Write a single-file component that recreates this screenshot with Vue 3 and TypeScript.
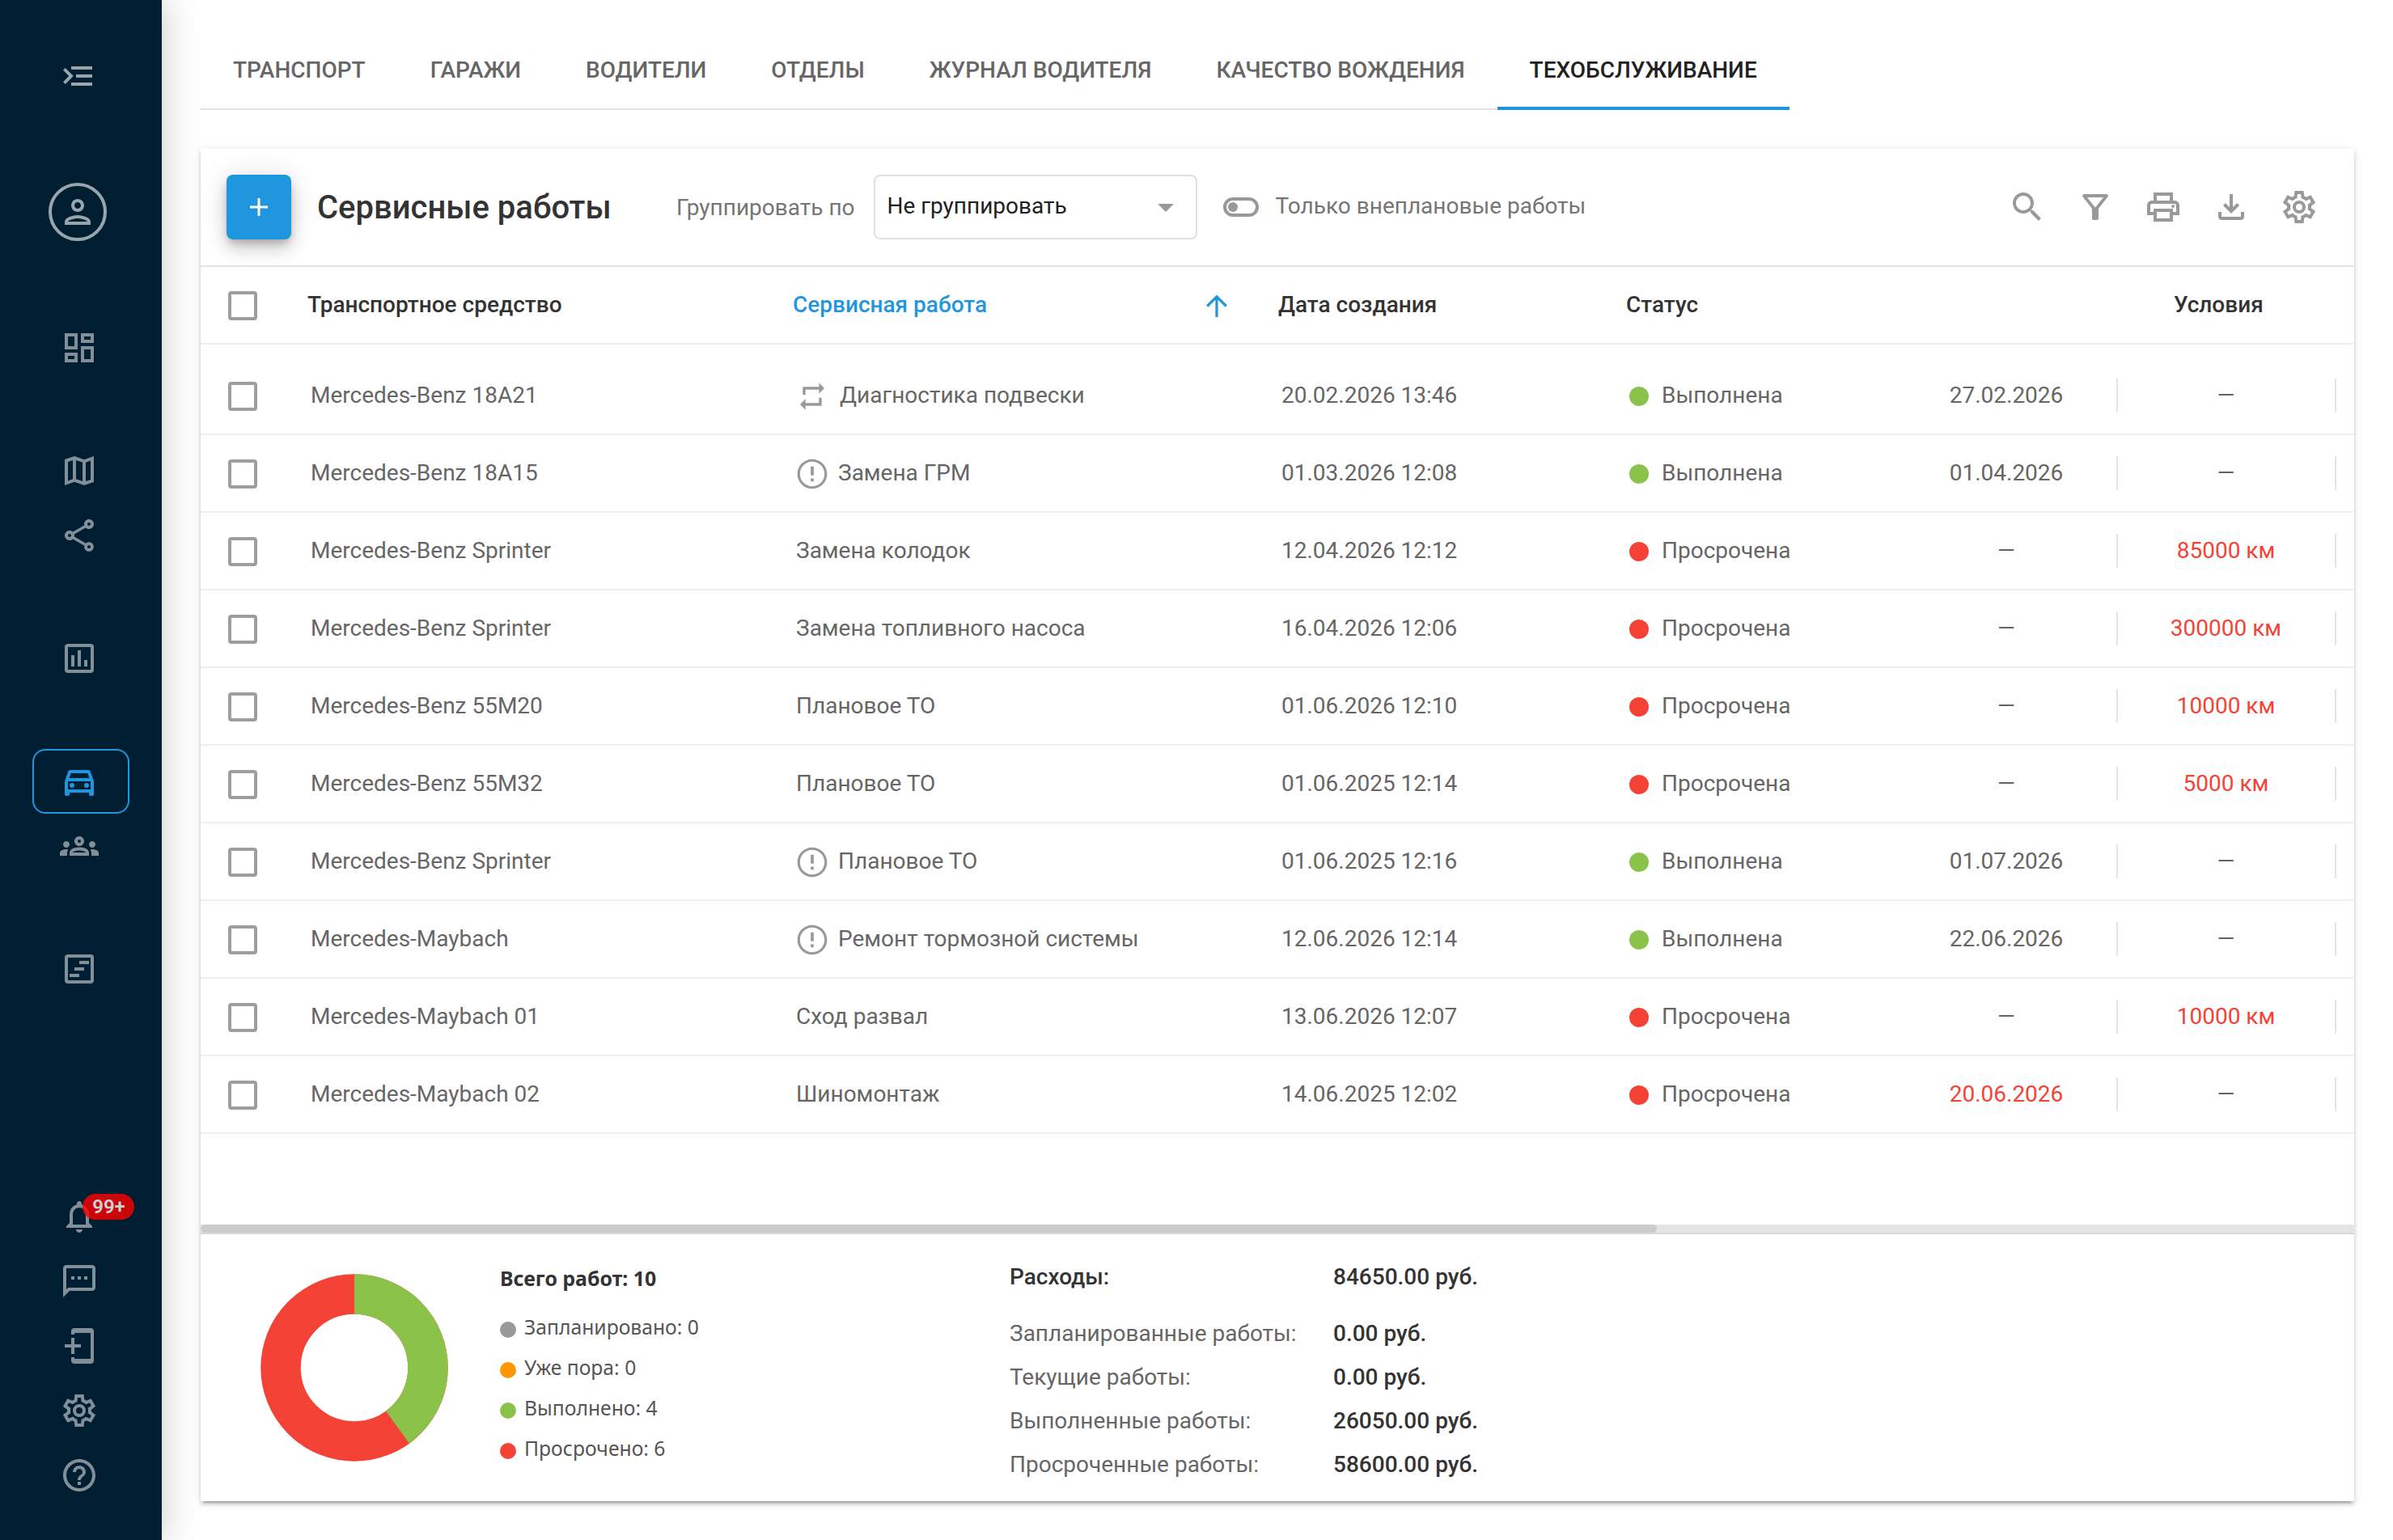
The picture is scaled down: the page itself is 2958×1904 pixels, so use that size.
<script setup lang="ts">
interface Job {
  vehicle: string
  work: string
  icon?: 'repeat' | 'alert'
  created: string
  done: boolean
  date: string
  dateLate?: boolean
  mileage: string
}

const GEAR =
  'M9.25 22l-.4-3.2q-.325-.125-.612-.3-.288-.175-.563-.375L4.7 19.375l-2.75-4.75 2.575-1.95Q4.5 12.5 4.5 12.337v-.675q0-.162.025-.337L1.95 9.375l2.75-4.75 2.975 1.25q.275-.2.575-.375.3-.175.6-.3l.4-3.2h5.5l.4 3.2q.325.125.613.3.287.175.562.375l2.975-1.25 2.75 4.75-2.575 1.95q.025.175.025.337v.675q0 .163-.05.338l2.575 1.95-2.75 4.75-2.95-1.25q-.275.2-.575.375-.3.175-.6.3l-.4 3.2zM11 20h1.975l.35-2.65q.775-.2 1.438-.588.662-.387 1.212-.937l2.475 1.025.975-1.7-2.15-1.625q.125-.35.175-.738Q17.5 12.4 17.5 12t-.05-.787q-.05-.388-.175-.738l2.15-1.625-.975-1.7-2.475 1.05q-.55-.575-1.212-.963-.663-.387-1.438-.587L13 4h-1.975l-.35 2.65q-.775.2-1.437.587-.663.388-1.213.938L5.55 7.15l-.975 1.7 2.15 1.6q-.125.375-.175.75-.05.375-.05.8 0 .4.05.775t.175.75l-2.15 1.625.975 1.7 2.475-1.05q.55.575 1.213.962.662.388 1.437.588zM12 8a4 4 0 1 0 0 8a4 4 0 1 0 0-8zM12 10a2 2 0 1 1 0 4a2 2 0 1 1 0-4z'

const icons: Record<string, string> = {
  menu: 'M21 18v-2H8v2h13zM4.4 17l5-5-5-5L3 8.4 6.6 12 3 15.6 4.4 17zM21 13v-2H11v2h10zm0-5V6H8v2h13z',
  person:
    'M12 6c1.1 0 2 .9 2 2s-.9 2-2 2-2-.9-2-2 .9-2 2-2m0 10c2.7 0 5.8 1.29 6 2H6c.23-.72 3.31-2 6-2m0-12C9.79 4 8 5.79 8 8s1.79 4 4 4 4-1.79 4-4-1.79-4-4-4zm0 10c-2.67 0-8 1.34-8 4v2h16v-2c0-2.66-5.33-4-8-4z',
  dashboard:
    'M19 5v2h-4V5h4M9 5v6H5V5h4m10 8v6h-4v-6h4M9 17v2H5v-2h4M21 3h-8v6h8V3zM11 3H3v10h8V3zm10 8h-8v10h8V11zm-10 4H3v6h8v-6z',
  map: 'M3 5l6-2 6 2.1L21 3v16l-6 2-6-2.1L3 21V5zM10 5.47v11.66l4 1.4V6.87l-4-1.4zM5 6.46v11.85l3-1.16V5.45L5 6.46zM19 17.54V5.7l-3 1.16v11.69l3-1.01z',
  share:
    'M18 16.08c-.76 0-1.44.3-1.96.77L8.91 12.7c.05-.23.09-.46.09-.7s-.04-.47-.09-.7l7.05-4.11c.54.5 1.25.81 2.04.81 1.66 0 3-1.34 3-3s-1.34-3-3-3-3 1.34-3 3c0 .24.04.47.09.7L8.04 9.81C7.5 9.31 6.79 9 6 9c-1.66 0-3 1.34-3 3s1.34 3 3 3c.79 0 1.5-.31 2.04-.81l7.12 4.16c-.05.21-.08.43-.08.65 0 1.61 1.31 2.92 2.92 2.92s2.92-1.31 2.92-2.92-1.31-2.92-2.92-2.92zM18 4c.55 0 1 .45 1 1s-.45 1-1 1-1-.45-1-1 .45-1 1-1zM6 13c-.55 0-1-.45-1-1s.45-1 1-1 1 .45 1 1-.45 1-1 1zm12 7.02c-.55 0-1-.45-1-1s.45-1 1-1 1 .45 1 1-.45 1-1 1z',
  chart:
    'M5 3h14a2 2 0 0 1 2 2v14a2 2 0 0 1-2 2H5a2 2 0 0 1-2-2V5a2 2 0 0 1 2-2zM5 5v14h14V5H5zM7 10h2v7H7zM11 7h2v10h-2zM15 13h2v4h-2z',
  car: 'M18.92 5.01C18.72 4.42 18.16 4 17.5 4h-11c-.66 0-1.21.42-1.42 1.01L3 11v8c0 .55.45 1 1 1h1c.55 0 1-.45 1-1v-1h12v1c0 .55.45 1 1 1h1c.55 0 1-.45 1-1v-8l-2.08-5.99zM6.85 6h10.29l1.04 3H5.81l1.04-3zM19 16H5v-5h14v5zM6 13.5a1.5 1.5 0 1 0 3 0a1.5 1.5 0 1 0-3 0zM15 13.5a1.5 1.5 0 1 0 3 0a1.5 1.5 0 1 0-3 0z',
  groups:
    'M4 13c1.1 0 2-.9 2-2s-.9-2-2-2-2 .9-2 2 .9 2 2 2zm1.13 1.1c-.37-.06-.74-.1-1.13-.1-.99 0-1.93.21-2.78.58C.48 14.9 0 15.62 0 16.43V18h4.5v-1.61c0-.83.23-1.61.63-2.29zM20 13c1.1 0 2-.9 2-2s-.9-2-2-2-2 .9-2 2 .9 2 2 2zm4 3.43c0-.81-.48-1.53-1.22-1.85-.85-.37-1.79-.58-2.78-.58-.39 0-.76.04-1.13.1.4.68.63 1.46.63 2.29V18H24v-1.57zm-7.76-2.78c-1.17-.52-2.61-.9-4.24-.9-1.63 0-3.07.39-4.24.9C6.68 14.13 6 15.21 6 16.39V18h12v-1.61c0-1.18-.68-2.26-1.76-2.74zM8.07 16c.09-.23.13-.39.91-.69.97-.38 1.99-.56 3.02-.56s2.05.18 3.02.56c.77.3.81.46.91.69H8.07zM12 8c.55 0 1 .45 1 1s-.45 1-1 1-1-.45-1-1 .45-1 1-1m0-2c-1.66 0-3 1.34-3 3s1.34 3 3 3 3-1.34 3-3-1.34-3-3-3z',
  gantt:
    'M5 3h14a2 2 0 0 1 2 2v14a2 2 0 0 1-2 2H5a2 2 0 0 1-2-2V5a2 2 0 0 1 2-2zM5 5v14h14V5H5zM12 7h6v2h-6zM9 11h6v2H9zM6 15h6v2H6z',
  bell: 'M12 22c1.1 0 2-.9 2-2h-4c0 1.1.9 2 2 2zm6-6v-5c0-3.07-1.63-5.64-4.5-6.32V4c0-.83-.67-1.5-1.5-1.5s-1.5.67-1.5 1.5v.68C7.64 5.36 6 7.92 6 11v5l-2 2v1h16v-1l-2-2zm-2 1H8v-6c0-2.48 1.51-4.5 4-4.5s4 2.02 4 4.5v6z',
  chat: 'M20 2H4c-1.1 0-2 .9-2 2v18l4-4h14c1.1 0 2-.9 2-2V4c0-1.1-.9-2-2-2zm0 14H5.17L4 17.17V4h16v12zM7 9h2v2H7zm4 0h2v2h-2zm4 0h2v2h-2z',
  device:
    'M9 1h10a2 2 0 0 1 2 2v18a2 2 0 0 1-2 2H9a2 2 0 0 1-2-2v-2h2v1h10V4H9v1H7V3a2 2 0 0 1 2-2zM7 7h2v4h4v2H9v4H7v-4H3v-2h4z',
  gear: GEAR,
  help: 'M11 18h2v-2h-2v2zm1-16C6.48 2 2 6.48 2 12s4.48 10 10 10 10-4.48 10-10S17.52 2 12 2zm0 18c-4.41 0-8-3.59-8-8s3.59-8 8-8 8 3.59 8 8-3.59 8-8 8zm0-14c-2.21 0-4 1.79-4 4h2c0-1.1.9-2 2-2s2 .9 2 2c0 2-3 1.75-3 5h2c0-2.25 3-2.5 3-5 0-2.21-1.79-4-4-4z',
  search:
    'M15.5 14h-.79l-.28-.27C15.41 12.59 16 11.11 16 9.5 16 5.91 13.09 3 9.5 3S3 5.91 3 9.5 5.91 16 9.5 16c1.61 0 3.09-.59 4.23-1.57l.27.28v.79l5 4.99L20.49 19l-4.99-5zm-6 0C7.01 14 5 11.99 5 9.5S7.01 5 9.5 5 14 7.01 14 9.5 11.99 14 9.5 14z',
  filter:
    'M7 6h10l-5.01 6.3L7 6zM4.25 5.61C6.27 8.2 10 13 10 13v6c0 .55.45 1 1 1h2c.55 0 1-.45 1-1v-6s3.72-4.8 5.74-7.39C20.25 4.95 19.78 4 18.95 4H5.04c-.83 0-1.3.95-.79 1.61z',
  print:
    'M19 8h-1V3H6v5H5c-1.66 0-3 1.34-3 3v6h4v4h12v-4h4v-6c0-1.66-1.34-3-3-3zM8 5h8v3H8V5zm8 12v2H8v-4h8v2zm2-2v-2H6v2H4v-4c0-.55.45-1 1-1h14c.55 0 1 .45 1 1v4h-2zM17 11.5a1 1 0 1 0 2 0a1 1 0 1 0-2 0z',
  download:
    'M12 16l-5-5 1.4-1.45 2.6 2.6V4h2v8.15l2.6-2.6L17 11l-5 5zM6 20c-.55 0-1.02-.2-1.41-.59A1.93 1.93 0 0 1 4 18v-3h2v3h12v-3h2v3c0 .55-.2 1.02-.59 1.41-.39.4-.86.59-1.41.59H6z',
  repeat: 'M7 7h10v3l4-4-4-4v3H5v6h2V7zm10 10H7v-3l-4 4 4 4v-3h12v-6h-2v4z',
  alert:
    'M11 15h2v2h-2zm0-8h2v6h-2zm.99-5C6.47 2 2 6.48 2 12s4.47 10 9.99 10C17.52 22 22 17.52 22 12S17.52 2 11.99 2zM12 20.3c-4.58 0-8.3-3.72-8.3-8.3s3.72-8.3 8.3-8.3 8.3 3.72 8.3 8.3-3.72 8.3-8.3 8.3z',
}

const navGroups: string[][] = [['dashboard'], ['map', 'share'], ['chart'], ['car', 'groups'], ['gantt']]
const navBottom: string[] = ['bell', 'chat', 'device', 'gear', 'help']
const tabs: string[] = [
  'ТРАНСПОРТ',
  'ГАРАЖИ',
  'ВОДИТЕЛИ',
  'ОТДЕЛЫ',
  'ЖУРНАЛ ВОДИТЕЛЯ',
  'КАЧЕСТВО ВОЖДЕНИЯ',
  'ТЕХОБСЛУЖИВАНИЕ',
]
const activeTab = tabs[6]
const tools: string[] = ['search', 'filter', 'print', 'download', 'gear']

const jobs: Job[] = [
  { vehicle: 'Mercedes-Benz 18A21', work: 'Диагностика подвески', icon: 'repeat', created: '20.02.2026 13:46', done: true, date: '27.02.2026', mileage: '—' },
  { vehicle: 'Mercedes-Benz 18A15', work: 'Замена ГРМ', icon: 'alert', created: '01.03.2026 12:08', done: true, date: '01.04.2026', mileage: '—' },
  { vehicle: 'Mercedes-Benz Sprinter', work: 'Замена колодок', created: '12.04.2026 12:12', done: false, date: '—', mileage: '85000 км' },
  { vehicle: 'Mercedes-Benz Sprinter', work: 'Замена топливного насоса', created: '16.04.2026 12:06', done: false, date: '—', mileage: '300000 км' },
  { vehicle: 'Mercedes-Benz 55M20', work: 'Плановое ТО', created: '01.06.2026 12:10', done: false, date: '—', mileage: '10000 км' },
  { vehicle: 'Mercedes-Benz 55M32', work: 'Плановое ТО', created: '01.06.2025 12:14', done: false, date: '—', mileage: '5000 км' },
  { vehicle: 'Mercedes-Benz Sprinter', work: 'Плановое ТО', icon: 'alert', created: '01.06.2025 12:16', done: true, date: '01.07.2026', mileage: '—' },
  { vehicle: 'Mercedes-Maybach', work: 'Ремонт тормозной системы', icon: 'alert', created: '12.06.2026 12:14', done: true, date: '22.06.2026', mileage: '—' },
  { vehicle: 'Mercedes-Maybach 01', work: 'Сход развал', created: '13.06.2026 12:07', done: false, date: '—', mileage: '10000 км' },
  { vehicle: 'Mercedes-Maybach 02', work: 'Шиномонтаж', created: '14.06.2025 12:02', done: false, date: '20.06.2026', dateLate: true, mileage: '—' },
]

const legend = [
  { label: 'Запланировано: 0', tone: 'grey' },
  { label: 'Уже пора: 0', tone: 'orange' },
  { label: 'Выполнено: 4', tone: 'green' },
  { label: 'Просрочено: 6', tone: 'red' },
]

const costs = [
  { label: 'Запланированные работы:', value: '0.00 руб.' },
  { label: 'Текущие работы:', value: '0.00 руб.' },
  { label: 'Выполненные работы:', value: '26050.00 руб.' },
  { label: 'Просроченные работы:', value: '58600.00 руб.' },
]
</script>

<template>
  <div class="app">
    <aside class="sidebar">
      <button class="menu">
        <svg class="icon" viewBox="0 0 24 24"><path :d="icons.menu" /></svg>
      </button>
      <div class="avatar">
        <svg class="icon" viewBox="0 0 24 24"><path :d="icons.person" /></svg>
      </div>
      <nav class="nav">
        <div v-for="(group, i) in navGroups" :key="i" class="nav-group">
          <a v-for="name in group" :key="name" class="nav-item" :class="{ active: name === 'car' }">
            <svg class="icon" viewBox="0 0 24 24"><path fill-rule="evenodd" :d="icons[name]" /></svg>
          </a>
        </div>
      </nav>
      <div class="nav-group bottom">
        <a v-for="name in navBottom" :key="name" class="nav-item">
          <svg class="icon" viewBox="0 0 24 24"><path fill-rule="evenodd" :d="icons[name]" /></svg>
          <span v-if="name === 'bell'" class="badge">99+</span>
        </a>
      </div>
    </aside>

    <main class="main">
      <div class="tabs">
        <a v-for="tab in tabs" :key="tab" class="tab" :class="{ current: tab === activeTab }">{{ tab }}</a>
      </div>

      <section class="card">
        <header class="toolbar">
          <button class="add">
            <svg viewBox="0 0 22 22"><path d="M11 0v22M0 11h22" /></svg>
          </button>
          <h1 class="title">Сервисные работы</h1>
          <span class="group-label">Группировать по</span>
          <div class="select"><span>Не группировать</span><i class="caret"></i></div>
          <div class="toggle"><i class="knob"></i></div>
          <span class="toggle-label">Только внеплановые работы</span>
          <div class="tools">
            <svg v-for="name in tools" :key="name" class="icon" viewBox="0 0 24 24"><path fill-rule="evenodd" :d="icons[name]" /></svg>
          </div>
        </header>

        <div class="row head">
          <div class="check-cell"><i class="check"></i></div>
          <div>Транспортное средство</div>
          <div class="sorted">
            <span>Сервисная работа</span>
            <svg viewBox="0 0 26 27"><path d="M13 27V2M1.2 13.5L13 1.8l11.8 11.7" /></svg>
          </div>
          <div>Дата создания</div>
          <div>Статус</div>
          <div class="cond-head">Условия</div>
        </div>

        <div class="body">
          <div v-for="(job, i) in jobs" :key="i" class="row item">
            <div class="check-cell"><i class="check"></i></div>
            <div class="cell">{{ job.vehicle }}</div>
            <div class="cell work">
              <span v-if="job.icon" class="work-icon" :class="job.icon">
                <svg viewBox="0 0 24 24"><path fill-rule="evenodd" :d="icons[job.icon]" /></svg>
              </span>
              <span>{{ job.work }}</span>
            </div>
            <div class="cell">{{ job.created }}</div>
            <div class="cell status">
              <i class="dot" :class="job.done ? 'green' : 'red'"></i>
              <span>{{ job.done ? 'Выполнена' : 'Просрочена' }}</span>
            </div>
            <div class="cond" :class="{ late: job.dateLate }">{{ job.date }}</div>
            <div class="cond" :class="{ late: job.mileage !== '—' }">{{ job.mileage }}</div>
          </div>
        </div>

        <div class="scroll"><div class="thumb"></div></div>

        <footer class="summary">
          <svg class="donut" viewBox="0 0 232 232">
            <circle class="d-red" cx="116" cy="116" r="91" pathLength="100" />
            <circle class="d-green" cx="116" cy="116" r="91" pathLength="100" stroke-dasharray="40 60" transform="rotate(-90 116 116)" />
          </svg>
          <div class="legend">
            <div class="legend-title">Всего работ: 10</div>
            <div v-for="l in legend" :key="l.label" class="legend-item">
              <i :class="l.tone"></i><span>{{ l.label }}</span>
            </div>
          </div>
          <div class="costs">
            <div class="cost total"><span>Расходы:</span><b>84650.00 руб.</b></div>
            <div v-for="c in costs" :key="c.label" class="cost">
              <span>{{ c.label }}</span><b>{{ c.value }}</b>
            </div>
          </div>
        </footer>
      </section>
    </main>
  </div>
</template>

<style>
html,
body {
  margin: 0;
  background: #fff;
}
</style>

<style scoped>
* {
  box-sizing: border-box;
}
.app {
  display: flex;
  width: 2958px;
  height: 1904px;
  overflow: hidden;
  background: #fff;
  font-family: Roboto, 'Liberation Sans', sans-serif;
  font-size: 28px;
  line-height: 36px;
  color: #666;
}
button {
  padding: 0;
  border: 0;
  background: none;
}
.icon {
  display: block;
  width: 48px;
  height: 48px;
  fill: currentColor;
}

.sidebar {
  display: flex;
  flex-direction: column;
  flex: none;
  width: 200px;
  height: 1904px;
  padding: 70px 0 40px;
  background: #001e31;
  box-shadow: 0 0 44px rgba(0, 0, 0, 0.22);
  color: rgba(255, 255, 255, 0.5);
  z-index: 1;
}
.menu {
  margin-left: 72px;
  width: 48px;
  height: 48px;
  color: rgba(255, 255, 255, 0.6);
}
.avatar {
  display: flex;
  align-items: center;
  justify-content: center;
  width: 72px;
  height: 72px;
  margin: 108px 0 0 60px;
  border: 4px solid #99a5ad;
  border-radius: 50%;
  color: #99a5ad;
}
.nav {
  display: flex;
  flex-direction: column;
  gap: 72px;
  margin-top: 92px;
}
.nav-group {
  display: flex;
  flex-direction: column;
  padding-left: 40px;
}
.nav-item {
  position: relative;
  display: flex;
  align-items: center;
  justify-content: center;
  width: 120px;
  height: 80px;
  padding-right: 4px;
}
.nav-item.active {
  padding-top: 4px;
  border: 2px solid #1f96dd;
  border-radius: 16px;
  color: #1f96dd;
}
.bottom {
  margin-top: auto;
}
.badge {
  position: absolute;
  left: 62px;
  top: 12px;
  width: 64px;
  height: 32px;
  padding-left: 1px;
  border-radius: 16px;
  background: #f00;
  opacity: 0.8;
  color: #fff;
  font-size: 24px;
  font-weight: 600;
  line-height: 32px;
  text-align: center;
}

.main {
  display: flex;
  flex-direction: column;
  align-items: flex-start;
  padding: 40px 48px 48px;
}
.tabs {
  display: flex;
  height: 96px;
  margin-bottom: 48px;
  box-shadow: inset 0 -2px #e4e4e4;
}
.tab {
  padding: 1px 40px 0;
  border-bottom: 4px solid transparent;
  font-weight: 500;
  line-height: 92px;
  white-space: nowrap;
}
.tab.current {
  border-color: #1f96dd;
  color: #212121;
}

.card {
  display: flex;
  flex-direction: column;
  width: 2662px;
  height: 1672px;
  background: #fff;
  box-shadow:
    0 6px 2px -4px rgba(0, 0, 0, 0.2),
    0 4px 4px rgba(0, 0, 0, 0.14),
    0 2px 10px rgba(0, 0, 0, 0.12);
}
.toolbar {
  display: flex;
  align-items: center;
  flex: none;
  height: 146px;
  padding: 0 44px 0 32px;
  border-bottom: 2px solid #e4e4e4;
  white-space: nowrap;
}
.add {
  display: flex;
  align-items: center;
  justify-content: center;
  width: 80px;
  height: 80px;
  border-radius: 8px;
  background: #1f96dd;
  box-shadow:
    0 6px 10px -2px rgba(0, 0, 0, 0.2),
    0 12px 20px rgba(0, 0, 0, 0.14),
    0 2px 36px rgba(0, 0, 0, 0.12);
}
.add svg {
  width: 22px;
  height: 22px;
  stroke: #fff;
  stroke-width: 3;
}
.title {
  width: 444px;
  margin: 0 0 0 32px;
  padding-top: 2px;
  font-size: 40px;
  font-weight: 500;
  line-height: 48px;
  color: #333;
}
.group-label {
  width: 244px;
  padding-top: 2px;
  color: #757575;
}
.select {
  display: flex;
  align-items: center;
  justify-content: space-between;
  width: 400px;
  height: 80px;
  padding: 0 27px 2px 14.5px;
  border: 2px solid #e0e0e0;
  border-radius: 8px;
  color: #212121;
}
.caret {
  margin-top: 4px;
  border: 10px solid transparent;
  border-top-color: #999;
  border-bottom: 0;
}
.toggle {
  width: 44px;
  height: 24px;
  margin: 0 20.5px 0 32px;
  padding: 2px;
  border: 4px solid #999;
  border-radius: 12px;
}
.knob {
  display: block;
  width: 12px;
  height: 12px;
  border-radius: 50%;
  background: #999;
}
.toggle-label {
  padding-bottom: 2px;
  color: #757575;
}
.tools {
  display: flex;
  gap: 36px;
  margin-left: auto;
  color: #999;
}

.row {
  display: grid;
  grid-template-columns: 132px 600px 600px 430px 338px 270px 270px;
  align-items: center;
  flex: none;
  height: 96px;
  border-bottom: 2px solid #eee;
  white-space: nowrap;
}
.head {
  font-weight: 500;
  color: #333;
}
.body {
  padding-top: 16px;
}
.check-cell {
  padding: 2px 0 0 34px;
}
.check {
  display: block;
  width: 36px;
  height: 36px;
  border: 4px solid #9e9e9e;
  border-radius: 4px;
}
.sorted {
  display: flex;
  align-items: center;
  justify-content: space-between;
  padding-right: 63px;
  color: #1f96dd;
}
.sorted svg {
  width: 26px;
  height: 27px;
  margin-top: 3px;
  fill: none;
  stroke: currentColor;
  stroke-width: 3.2;
}
.cond-head {
  padding-left: 339px;
}
.cell {
  padding-left: 4px;
}
.work,
.status {
  display: flex;
  align-items: center;
}
.work-icon {
  display: flex;
  align-items: center;
  justify-content: center;
  width: 44px;
  height: 44px;
  margin: 2px 10px 0 -2px;
  color: #999;
}
.work-icon.repeat {
  margin-right: 12px;
}
.work-icon svg {
  width: 44px;
  height: 44px;
  fill: currentColor;
}
.work-icon.repeat svg {
  width: 40px;
  height: 40px;
}
.dot {
  width: 24px;
  height: 24px;
  margin: 2px 16px 0 0;
  border-radius: 50%;
}
.green {
  background: #8bc34a;
}
.red {
  background: #f44336;
}
.orange {
  background: #ff9800;
}
.grey {
  background: #999;
}
.cond {
  height: 42px;
  padding-right: 1px;
  border-right: 2px solid #e4e4e4;
  line-height: 42px;
  text-align: center;
}
.cond:not(:last-child) {
  padding-right: 4px;
}
.cond.late {
  color: #f44336;
}

.scroll {
  flex: none;
  height: 12px;
  margin-top: auto;
  border-bottom: 2px solid #d9d9d9;
  background: #e4e4e4;
}
.thumb {
  width: 1800px;
  height: 10px;
  border-radius: 5px;
  background: #ccc;
}
.summary {
  display: flex;
  flex: none;
  height: 330px;
  padding-left: 74px;
}
.donut {
  width: 232px;
  height: 232px;
  margin: 49px 64px 0 0;
  fill: none;
  stroke-width: 49.5;
}
.d-red {
  stroke: #f44336;
}
.d-green {
  stroke: #8bc34a;
}
.legend {
  width: 630px;
  padding-top: 35px;
  font-family: 'Noto Sans', 'Open Sans', sans-serif;
  font-size: 24.7px;
  color: #555;
}
.legend-title {
  margin-bottom: 17px;
  font-size: 24.9px;
  font-weight: 700;
  line-height: 38px;
  color: #333;
}
.legend-item {
  display: flex;
  align-items: center;
  height: 50px;
}
.legend-item i {
  width: 20px;
  height: 20px;
  margin: 6px 10px 0 0;
  border-radius: 50%;
}
.costs {
  padding-top: 35px;
}
.cost {
  display: flex;
  line-height: 54px;
}
.cost span {
  width: 400px;
}
.cost b {
  font-weight: 500;
  color: #333;
}
.total {
  margin: -9px 0 16px;
  font-weight: 500;
  color: #333;
}
</style>
